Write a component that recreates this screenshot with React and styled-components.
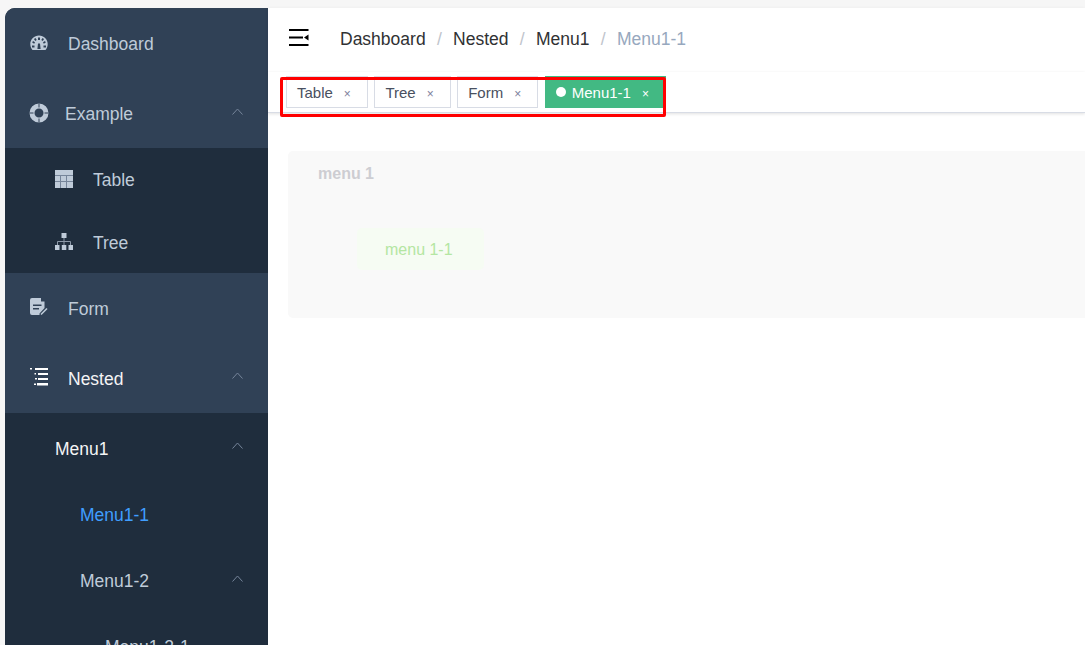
import React from "react";
import styled, { createGlobalStyle } from "styled-components";

const GlobalStyle = createGlobalStyle`
  html, body {
    margin: 0;
    height: 100%;
    overflow: hidden;
    background: #f6f6f6;
    font-family: "Liberation Sans", Arial, sans-serif;
  }
`;

const DashboardIcon = () => (
  <svg width="18" height="16" viewBox="0 0 18 16">
    <path
      fill="#bfcbd9"
      fillRule="evenodd"
      d="M9 .5C4.2.5.3 4.3.3 9c0 2.3.8 4.600 2.200 6h13c1.400-1.400 2.200-3.700 2.200-6C17.700 4.300 13.800.5 9 .5zM8 2.500h2V5H8zM4 4l1.500-1 1.200 2-1.500 1zm8.500-1L14 4l-1.200 2-1.500-1zM2.200 7.500l.8-1.500 2 1.200-.8 1.500zm13.600 0-2 1.200-.8-1.500 2-1.200zM2 10.500h2.500v2H2zm11.500 0H16v2h-2.500zM8 8.500l2 0 .6 5.500H7.400z"
    />
  </svg>
);

const ExampleIcon = () => (
  <svg width="20" height="20" viewBox="0 0 20 20">
    <circle cx="10" cy="10" r="7" fill="none" stroke="#bfcbd9" strokeWidth="5" />
    <path stroke="#304156" strokeWidth="1" d="M10 .5v4M10 15.500v4M.5 10h4M15.500 10h4" />
  </svg>
);

const TableIcon = () => (
  <svg width="18" height="18" viewBox="0 0 18 18">
    <rect width="18" height="18" fill="#bfcbd9" />
    <path fill="none" stroke="#76859a" strokeWidth="1" d="M0 5.500h18M0 11.500h18M5.500 5.500V18M11.500 5.500V18" />
  </svg>
);

const TreeIcon = () => (
  <svg width="18" height="17" viewBox="0 0 18 17">
    <path fill="#bfcbd9" d="M6.500 0h5v5h-5zM0 12h4.500v5H0zm6.800 0h4.500v5H6.800zm6.700 0H18v5h-4.500z" />
    <path fill="none" stroke="#8c98a8" strokeWidth="1" d="M9 5v7M2.500 12V8.500h13V12" />
  </svg>
);

const FormIcon = () => (
  <svg width="18" height="18" viewBox="0 0 18 18">
    <path
      fill="#bfcbd9"
      fillRule="evenodd"
      d="M2 0h9v3.500h3.500V10l-5 5.500V17H2a2 2 0 0 1-2-2V2a2 2 0 0 1 2-2zm1 6.500v1.500h8.500V6.500zm0 3.500v1.500h6V10z"
    />
    <path fill="none" stroke="#bfcbd9" strokeWidth="1.600" d="M11 16.500l6-6" />
  </svg>
);

const NestedIcon = () => (
  <svg width="18" height="18" viewBox="0 0 18 18">
    <path
      fill="#fff"
      d="M0 0h2v1.500H0zM5 0h13v2H5zM4.500 5H6v1.500H4.500zM8 5h10v2H8zM5 10h2v1.500H5zM8 10h10v2H8zM4 15.500h2V17H4zM7 15h11v2.500H7z"
    />
  </svg>
);

const Chevron = styled.svg`
  flex: none;
  width: 11px;
  height: 7px;
  margin-left: auto;
  margin-right: 25px;
  margin-top: -7px;
`;

const UpArrow = () => (
  <Chevron viewBox="0 0 11 7">
    <path fill="none" stroke="#76859a" strokeWidth="1" d="M.5 6.500 5.500 1l5 5.500" />
  </Chevron>
);

const Page = styled.div`
  box-sizing: border-box;
  display: flex;
  width: 1085px;
  height: 645px;
  padding: 8px 0 0 5px;
  overflow: hidden;
`;

const Sidebar = styled.aside`
  flex: none;
  width: 263px;
  height: 700px;
  background: #1f2d3d;
  border-top-left-radius: 10px;
  overflow: hidden;
`;

const Row = styled.div`
  display: flex;
  align-items: center;
  box-sizing: border-box;
  height: ${(p) => p.$height}px;
  padding-left: ${(p) => p.$indent}px;
  padding-top: ${(p) => p.$nudge || 0}px;
  background: ${(p) => (p.$sub ? "#1f2d3d" : "#304156")};
  color: ${(p) => p.$color || "#bfcbd9"};
  font-size: 17.5px;
`;

const IconSlot = styled.span`
  display: flex;
  align-items: center;
  justify-content: center;
  flex: none;
  width: ${(p) => p.$width}px;
  margin-top: -4px;
  margin-right: ${(p) => p.$gap}px;
`;

const Main = styled.main`
  flex: none;
  width: 817px;
  display: flex;
  flex-direction: column;
  background: #fff;
`;

const Navbar = styled.header`
  box-sizing: border-box;
  display: flex;
  align-items: center;
  height: 64px;
  padding: 0 0 2px 21px;
  background: #fff;
  box-shadow: 0 1px 4px rgba(0, 21, 41, 0.08);
  position: relative;
`;

const Hamburger = styled.svg`
  flex: none;
  width: 20px;
  height: 17px;
  margin: -3px 31px 0 0;
`;

const Crumb = styled.span`
  font-size: 17.5px;
  color: ${(p) => (p.$last ? "#97a8be" : "#303133")};
`;

const Slash = styled.span`
  font-size: 17.5px;
  color: #c0c4cc;
  margin: 0 11.3px;
`;

const TagsBar = styled.div`
  position: relative;
  display: flex;
  align-items: flex-end;
  gap: 6.5px;
  box-sizing: border-box;
  height: 41px;
  padding: 0 0 4px 18px;
  background: #fff;
  border-bottom: 1px solid #d8dce5;
  box-shadow: 0 1px 3px rgba(0, 0, 0, 0.12);
`;

const Tag = styled.div`
  box-sizing: border-box;
  display: flex;
  align-items: center;
  height: 32px;
  padding: 0 16px 0 10px;
  font-size: 15px;
  color: ${(p) => (p.$active ? "#fff" : "#495060")};
  background: ${(p) => (p.$active ? "#42b983" : "#fff")};
  border: 1px solid ${(p) => (p.$active ? "#42b983" : "#d8dce5")};
`;

const Dot = styled.span`
  flex: none;
  width: 10px;
  height: 10px;
  margin-right: 6px;
  border-radius: 50%;
  background: #fff;
`;

const Close = styled.span`
  margin-left: 11px;
  margin-top: 3px;
  font-size: 12px;
  color: ${(p) => (p.$active ? "#fff" : "#7d7f9c")};
`;

const Annotation = styled.div`
  position: absolute;
  left: 12px;
  top: 5px;
  width: 386px;
  height: 40px;
  box-sizing: border-box;
  border: 3px solid #ff0000;
  border-radius: 2px;
  pointer-events: none;
`;

const Content = styled.section`
  padding: 38px 0 0 20px;
`;

const Card = styled.div`
  box-sizing: border-box;
  width: 830px;
  height: 167px;
  padding: 14px 30px;
  background: #f9f9f9;
  border-radius: 5px;
`;

const CardTitle = styled.div`
  font-size: 16px;
  font-weight: bold;
  line-height: 18px;
  color: #cdcdd2;
`;

const InnerCard = styled.div`
  display: flex;
  align-items: center;
  box-sizing: border-box;
  width: 127px;
  height: 42px;
  margin: 45px 0 0 39px;
  padding: 2px 0 0 28px;
  font-size: 16px;
  color: #b4e6a2;
  background: #f6fcf3;
  border-radius: 5px;
`;

const tags = ["Table", "Tree", "Form"];

export default function App() {
  return (
    <>
      <GlobalStyle />
      <Page>
        <Sidebar>
          <Row $height={70} $indent={24} $nudge={3}>
            <IconSlot $width={20} $gap={19}><DashboardIcon /></IconSlot>
            Dashboard
          </Row>
          <Row $height={70} $indent={24} $nudge={3}>
            <IconSlot $width={20} $gap={16}><ExampleIcon /></IconSlot>
            Example
            <UpArrow />
          </Row>
          <Row $height={62.5} $indent={50} $nudge={3} $sub>
            <IconSlot $width={18} $gap={20}><TableIcon /></IconSlot>
            Table
          </Row>
          <Row $height={62.5} $indent={50} $nudge={3} $sub>
            <IconSlot $width={18} $gap={20}><TreeIcon /></IconSlot>
            Tree
          </Row>
          <Row $height={70} $indent={25} $nudge={2}>
            <IconSlot $width={18} $gap={20}><FormIcon /></IconSlot>
            Form
          </Row>
          <Row $height={70} $indent={25} $nudge={2} $color="#f4f4f5">
            <IconSlot $width={18} $gap={20}><NestedIcon /></IconSlot>
            Nested
            <UpArrow />
          </Row>
          <Row $height={70} $indent={50} $nudge={2} $sub $color="#f4f4f5">
            Menu1
            <UpArrow />
          </Row>
          <Row $height={64} $indent={75} $sub $color="#409eff">Menu1-1</Row>
          <Row $height={67} $indent={75} $nudge={2} $sub>
            Menu1-2
            <UpArrow />
          </Row>
          <Row $height={66} $indent={100} $sub>Menu1-2-1</Row>
        </Sidebar>
        <Main>
          <Navbar>
            <Hamburger viewBox="0 0 20 17">
              <path fill="#000" d="M0 0h19.500v2H0zM0 7.500h14v2H0zM0 15h19.500v2H0zM19.500 5.500v6L15 8.500z" />
            </Hamburger>
            <Crumb>Dashboard</Crumb>
            <Slash>/</Slash>
            <Crumb>Nested</Crumb>
            <Slash>/</Slash>
            <Crumb>Menu1</Crumb>
            <Slash>/</Slash>
            <Crumb $last>Menu1-1</Crumb>
          </Navbar>
          <TagsBar>
            {tags.map((t) => (
              <Tag key={t}>
                {t}
                <Close>×</Close>
              </Tag>
            ))}
            <Tag $active>
              <Dot />
              Menu1-1
              <Close $active>×</Close>
            </Tag>
            <Annotation />
          </TagsBar>
          <Content>
            <Card>
              <CardTitle>menu 1</CardTitle>
              <InnerCard>menu 1-1</InnerCard>
            </Card>
          </Content>
        </Main>
      </Page>
    </>
  );
}
